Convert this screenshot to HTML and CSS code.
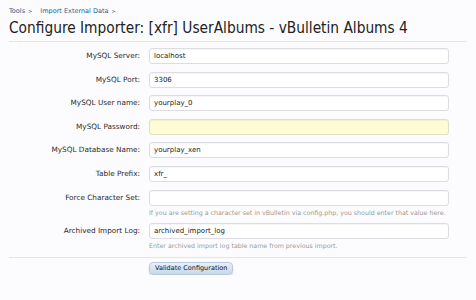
FILE: index.html
```html
<!DOCTYPE html>
<html lang="en">
<head>
  <meta charset="UTF-8">
  <title>Configure Importer</title>
  <link rel="stylesheet" href="styles.css">
</head>
<body>
  <div class="page">
    <div class="breadcrumb">
      <a href="#">Tools</a><span class="sep">&gt;</span>
      <a href="#">Import External Data</a><span class="sep">&gt;</span>
    </div>
    <h1>Configure Importer: [xfr] UserAlbums - vBulletin Albums 4</h1>

    <form class="config">
      <div class="row">
        <label>MySQL Server:</label>
        <div class="field"><input type="text" value="localhost"></div>
      </div>
      <div class="row">
        <label>MySQL Port:</label>
        <div class="field"><input type="text" value="3306"></div>
      </div>
      <div class="row">
        <label>MySQL User name:</label>
        <div class="field"><input type="text" value="yourplay_0"></div>
      </div>
      <div class="row">
        <label>MySQL Password:</label>
        <div class="field"><input type="password" class="autofill"></div>
      </div>
      <div class="row">
        <label>MySQL Database Name:</label>
        <div class="field"><input type="text" value="yourplay_xen"></div>
      </div>
      <div class="row">
        <label>Table Prefix:</label>
        <div class="field"><input type="text" value="xfr_"></div>
      </div>
      <div class="row">
        <label>Force Character Set:</label>
        <div class="field">
          <input type="text">
          <p class="hint">If you are setting a character set in vBulletin via config.php, you should enter that value here.</p>
        </div>
      </div>
      <div class="row">
        <label>Archived Import Log:</label>
        <div class="field">
          <input type="text" value="archived_import_log">
          <p class="hint">Enter archived import log table name from previous import.</p>
        </div>
      </div>
      <div class="submit">
        <button type="button">Validate Configuration</button>
      </div>
    </form>
  </div>
</body>
</html>
```

FILE: styles.css
```css
body {
  margin: 0;
  background: #fcfcfe;
  font-family: 'DejaVu Sans', Verdana, sans-serif;
  color: #222;
}

.page {
  padding: 7px 10px 0 9px;
}

.breadcrumb {
  font-size: 6.5px;
  line-height: 8px;
  height: 9px;
}

.breadcrumb a {
  color: #1f5a8c;
  text-decoration: none;
}

.breadcrumb .sep {
  color: #555;
  font-size: 5px;
  margin: 0 6px 0 3px;
}

h1 {
  margin: 2px 0 0;
  font-family: 'DejaVu Sans Condensed', 'DejaVu Sans', sans-serif;
  font-weight: normal;
  font-size: 15.3px;
  line-height: 21px;
  color: #222;
  white-space: nowrap;
  padding-bottom: 2px;
  border-bottom: 1px solid #e4e4ea;
}

.config {
  margin-top: 6px;
}

.row {
  display: flex;
  margin-bottom: 7.6px;
}

.row label {
  width: 131px;
  flex: none;
  text-align: right;
  font-size: 7.3px;
  line-height: 16px;
  color: #2a2a2a;
}

.field input {
  display: block;
  width: 300px;
  height: 16px;
  box-sizing: border-box;
  margin: 0 0 0 9px;
  padding: 0 4px;
  border: 1px solid #dcdce2;
  border-radius: 3px;
  background: #fff;
  font-family: 'DejaVu Sans', sans-serif;
  font-size: 7px;
  color: #222;
  box-shadow: inset 0 1px 1px rgba(0,0,0,0.04);
}

.field input.autofill {
  background: #fdfdd4;
  border-color: #e0e0c4;
}

.hint {
  margin: 3px 0 -1px 9px;
  font-size: 6.3px;
  line-height: 8px;
  color: #999;
}

.submit {
  border-top: 1px solid #e4e4ea;
  margin-top: 1px;
  padding: 4px 0 0 131px;
}

.submit button {
  display: block;
  margin-left: 9px;
  height: 13px;
  padding: 0 5px;
  border: 1px solid #b8cadb;
  border-radius: 4px;
  background: linear-gradient(#e8f0f8, #c7d8e8);
  box-shadow: 0 1px 2px rgba(0,0,0,0.15);
  font-family: 'DejaVu Sans', sans-serif;
  font-size: 6.5px;
  color: #111;
}
```
